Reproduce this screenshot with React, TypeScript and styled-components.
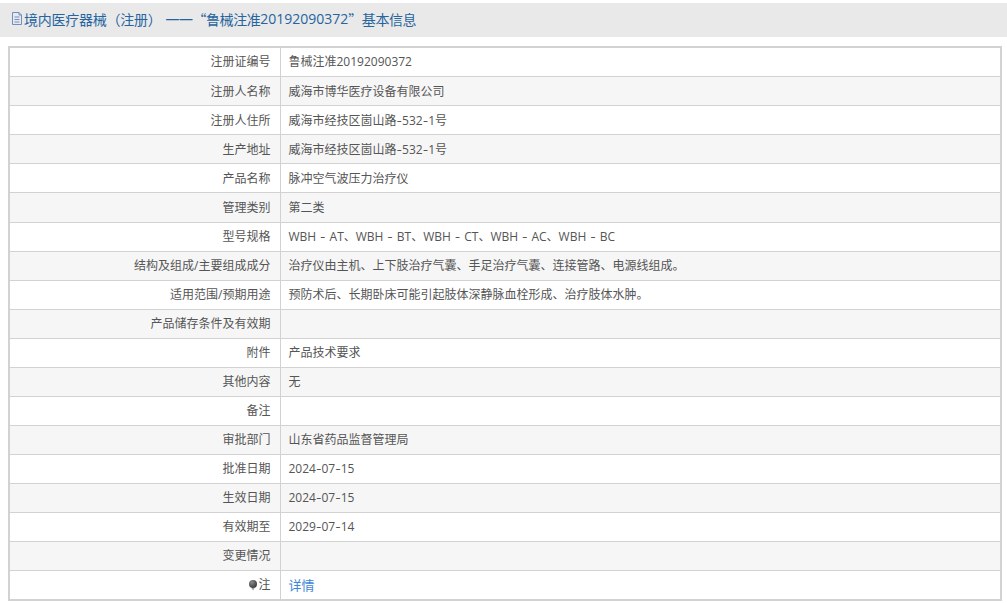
import React from "react";
import styled, { createGlobalStyle } from "styled-components";

const Global = createGlobalStyle`
  html, body { margin: 0; padding: 0; background: #fff; }
  body { font-family: "Open Sans", "Noto Sans CJK SC", sans-serif; overflow: hidden; text-spacing-trim: space-all; }
`;

const Page = styled.div`
  width: 1007px;
  height: 603px;
  padding-top: 3px;
  box-sizing: border-box;
  overflow: hidden;
`;

const Header = styled.div`
  height: 34px;
  box-sizing: border-box;
  padding: 0 0 3px 11px;
  background: #e9e9e9;
  display: flex;
  align-items: center;
  color: #26649f;
  font-size: 14px;
  letter-spacing: -0.45px;
  white-space: pre;
  margin-bottom: 9px;
`;

const Cjk = styled.span`
  font-family: "Noto Sans CJK SC", sans-serif;
`;

const Category = styled(Cjk)`
  letter-spacing: -0.25px;
`;

const Dashes = styled.span`
  margin-left: 4px;
  letter-spacing: -0.5px;
`;

const RegNumber = styled.span`
  letter-spacing: 0;
`;

const DocIcon = styled.svg`
  width: 12px;
  height: 13px;
  flex: none;
  margin-right: 1px;
`;

const Table = styled.table`
  width: 994px;
  margin-left: 8px;
  border-collapse: collapse;
  table-layout: fixed;
  border: 2px solid #d2d2d2;
  font-size: 12px;
  color: #555;
`;

const Row = styled.tr<{ $alt?: boolean; $tall?: boolean; $nudge?: boolean }>`
  height: ${(p) => (p.$tall ? "30px" : "29px")};
  background: ${(p) => (p.$alt ? "#f6f6f6" : "#fff")};
  & > td {
    padding-top: ${(p) => (p.$nudge ? "2px" : "0")};
  }
`;

const Label = styled.td`
  width: 271px;
  box-sizing: border-box;
  padding-right: 9px;
  text-align: right;
  border: 1px solid #d2d2d2;
  border-width: 1px 1px 1px 0;
  white-space: nowrap;
`;

const Value = styled.td`
  padding-left: 8px;
  border: 1px solid #d2d2d2;
  border-width: 1px 0;
  white-space: nowrap;
  word-spacing: 0.8px;
`;

const Hyphen = styled.span`
  font-family: Inter, sans-serif;
`;

const DetailLink = styled.a`
  color: #3d86d8;
  font-size: 13px;
  text-decoration: none;
`;

const Bulb = styled.svg`
  width: 10px;
  height: 12px;
  vertical-align: -2px;
`;

const rows: [string, string][] = [
  ["注册证编号", "鲁械注准20192090372"],
  ["注册人名称", "威海市博华医疗设备有限公司"],
  ["注册人住所", "威海市经技区崮山路-532-1号"],
  ["生产地址", "威海市经技区崮山路-532-1号"],
  ["产品名称", "脉冲空气波压力治疗仪"],
  ["管理类别", "第二类"],
  ["型号规格", "WBH - AT、WBH - BT、WBH - CT、WBH - AC、WBH - BC"],
  ["结构及组成/主要组成成分", "治疗仪由主机、上下肢治疗气囊、手足治疗气囊、连接管路、电源线组成。"],
  ["适用范围/预期用途", "预防术后、长期卧床可能引起肢体深静脉血栓形成、治疗肢体水肿。"],
  ["产品储存条件及有效期", ""],
  ["附件", "产品技术要求"],
  ["其他内容", "无"],
  ["备注", ""],
  ["审批部门", "山东省药品监督管理局"],
  ["批准日期", "2024-07-15"],
  ["生效日期", "2024-07-15"],
  ["有效期至", "2029-07-14"],
  ["变更情况", ""],
];

function withHyphens(text: string) {
  return text.split(/(-)/).map((part, i) =>
    part === "-" ? <Hyphen key={i}>-</Hyphen> : part
  );
}

export default function App() {
  return (
    <Page>
      <Global />
      <Header>
        <DocIcon viewBox="0 0 12 13" fill="none" stroke="#6f8fc0" strokeWidth="1">
          <path d="M1.5 .5H8l2.5 2.5v9.5h-9z" />
          <path d="M3.5 5h5M3.5 7.5h5M3.5 10h5M8 .5V3h2.5" />
        </DocIcon>
        <Category>境内医疗器械（注册）</Category>
        <Dashes>——</Dashes>
        <Cjk>“鲁械注准</Cjk>
        <RegNumber>20192090372</RegNumber>
        <Cjk>”基本信息</Cjk>
      </Header>
      <Table>
        <tbody>
          {rows.map(([k, v], i) => (
            <Row key={k} $alt={i % 2 === 1} $tall={i === 5} $nudge={i >= 1 && i <= 4}>
              <Label>{k}</Label>
              <Value>{withHyphens(v)}</Value>
            </Row>
          ))}
          <Row $tall>
            <Label>
              <Bulb viewBox="0 0 10 12">
                <defs>
                  <radialGradient id="bulbGlass" cx="0.35" cy="0.3" r="0.8">
                    <stop offset="0" stopColor="#8a8a8a" />
                    <stop offset="1" stopColor="#333" />
                  </radialGradient>
                </defs>
                <circle cx="5" cy="5" r="4" fill="url(#bulbGlass)" />
                <path d="M3.5 9h3L5 11.5z" fill="#999" />
              </Bulb>
              注
            </Label>
            <Value>
              <DetailLink href="#">详情</DetailLink>
            </Value>
          </Row>
        </tbody>
      </Table>
    </Page>
  );
}
